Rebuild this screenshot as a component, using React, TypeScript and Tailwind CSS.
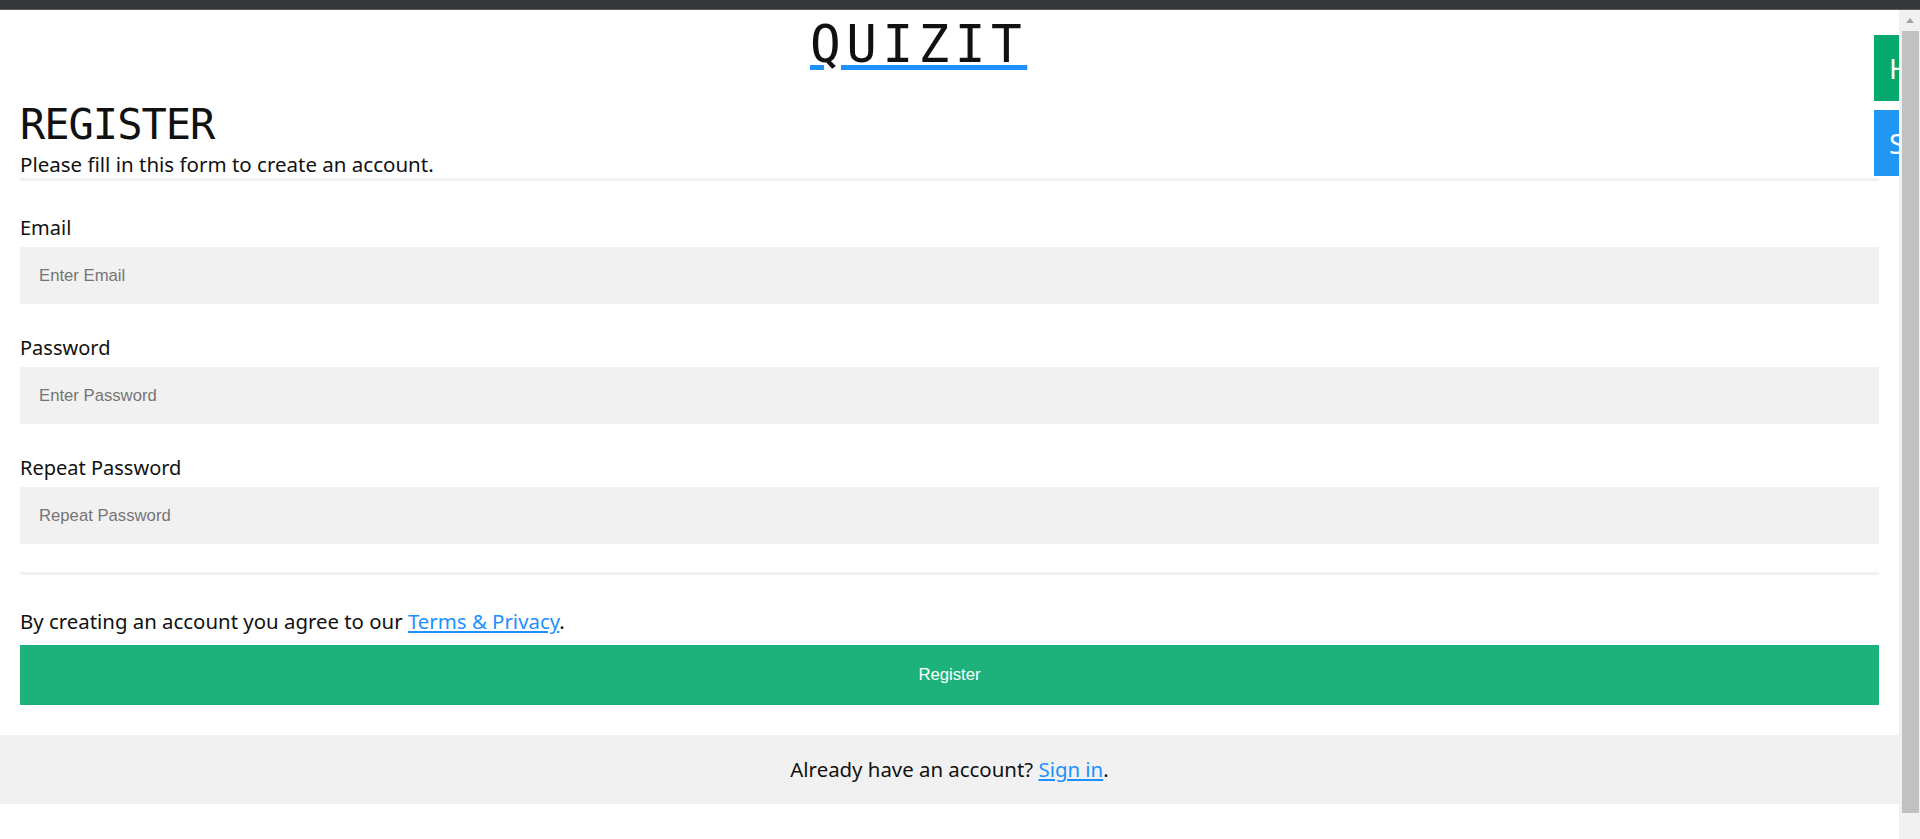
import { useState } from "react";

const FIELDS = [
  { label: "Email", placeholder: "Enter Email", type: "text" },
  { label: "Password", placeholder: "Enter Password", type: "password" },
  { label: "Repeat Password", placeholder: "Repeat Password", type: "password" },
];

const SIDE_LINKS = [
  { label: "Home", top: "top-[35px]", bg: "bg-[#04aa6d]" },
  { label: "Sign up", top: "top-[110px]", bg: "bg-[#2196f3]" },
];

export default function App() {
  const [values, setValues] = useState<Record<string, string>>({});

  return (
    <div className="relative h-[839px] w-full overflow-hidden bg-white text-[#111] font-['Noto_Sans',sans-serif]">
      {/* browser strip */}
      <div className="h-[10px] border-b border-[#5d5e61] bg-[#35363a]" />

      <div className="flex h-[829px]">
        <main className="flex-1">
          {/* Logo */}
          <div className="pt-[9px] pl-[810px]">
            <h1 className="font-['DejaVu_Sans_Mono',monospace] text-[51px] leading-none tracking-[5.5px] underline decoration-[#1e90ff] decoration-5 underline-offset-[3px]">
              QUIZIT
            </h1>
          </div>

          <form className="px-[20px]" onSubmit={(e) => e.preventDefault()}>
            <h2 className="mt-[34px] font-['DejaVu_Sans_Mono',monospace] text-[42px] leading-none tracking-[-1px]">
              REGISTER
            </h2>
            <p className="mt-[5px] text-[20.5px] leading-[26px]">
              Please fill in this form to create an account.
            </p>
            <div className="mt-[1px] h-[3px] bg-[#f1f1f1]" />

            {FIELDS.map((field, i) => (
              <div key={field.label} className={i === 0 ? "mt-[32px]" : "mt-[29px]"}>
                <label className="block text-[20px] leading-[29px]">{field.label}</label>
                <input
                  type={field.type}
                  placeholder={field.placeholder}
                  value={values[field.label] ?? ""}
                  onChange={(e) => setValues({ ...values, [field.label]: e.target.value })}
                  className="mt-[5px] block h-[57px] w-full bg-[#f1f1f1] px-[19px] font-['Liberation_Sans',Arial,sans-serif] text-[16.7px] text-[#111] outline-none placeholder:text-[#757575]"
                />
              </div>
            ))}

            <div className="mt-[28px] h-[3px] bg-[#f1f1f1]" />

            <p className="mt-[32px] text-[20.4px] leading-[29px]">
              By creating an account you agree to our{" "}
              <a href="#" className="text-[#1e90ff] underline">
                Terms &amp; Privacy
              </a>
              .
            </p>

            <button
              type="submit"
              className="mt-[9px] block h-[60px] w-full bg-[#1db27c] font-['Liberation_Sans',Arial,sans-serif] text-[16.7px] text-white"
            >
              Register
            </button>
          </form>

          <div className="mt-[30px] bg-[#f1f1f1] py-[20px] text-center text-[20.4px] leading-[29px]">
            Already have an account?{" "}
            <a href="#" className="text-[#1e90ff] underline">
              Sign in
            </a>
            .
          </div>
        </main>

        {/* scrollbar */}
        <div className="relative z-10 flex w-[21px] flex-col items-center bg-[#f1f1f1]">
          <div className="flex h-[21px] w-full items-center justify-center">
            <div className="h-0 w-0 border-x-[4.5px] border-b-[5px] border-x-transparent border-b-[#a3a3a3]" />
          </div>
          <div className="ml-[1px] h-[782px] w-[17px] bg-[#c1c1c1]" />
        </div>
      </div>

      {SIDE_LINKS.map((link) => (
        <a
          key={link.label}
          href="#"
          className={`absolute left-[1874px] flex h-[66px] w-[130px] items-center pl-[15px] text-[28px] leading-none text-white ${link.top} ${link.bg}`}
        >
          {link.label}
        </a>
      ))}
    </div>
  );
}
